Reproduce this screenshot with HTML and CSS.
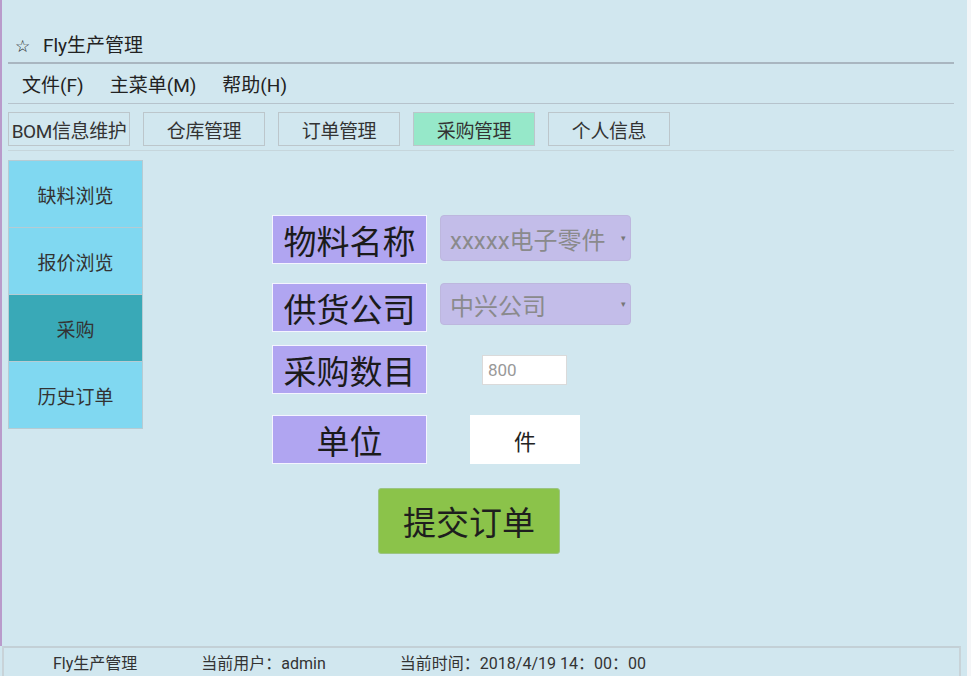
FILE: index.html
```html
<!DOCTYPE html>
<html lang="zh-CN">
<head>
<meta charset="utf-8">
<title>Fly生产管理</title>
<link rel="stylesheet" href="styles.css">
</head>
<body>
<div class="app">
  <div class="main">
    <div class="title"><span class="star">☆</span><span class="title-text">Fly生产管理</span></div>
    <div class="menu">
      <span class="menu-item">文件(F)</span>
      <span class="menu-item">主菜单(M)</span>
      <span class="menu-item">帮助(H)</span>
    </div>
    <div class="tabs">
      <div class="tab">BOM信息维护</div>
      <div class="tab">仓库管理</div>
      <div class="tab">订单管理</div>
      <div class="tab tab-active">采购管理</div>
      <div class="tab">个人信息</div>
    </div>
    <div class="content">
      <div class="side">
        <div class="side-item">缺料浏览</div>
        <div class="side-item">报价浏览</div>
        <div class="side-item side-active">采购</div>
        <div class="side-item">历史订单</div>
      </div>
      <div class="form">
        <div class="row row1">
          <div class="label">物料名称</div>
          <div class="combo combo1"><span>xxxxx电子零件</span><span class="arrow">▾</span></div>
        </div>
        <div class="row row2">
          <div class="label">供货公司</div>
          <div class="combo combo2"><span>中兴公司</span><span class="arrow">▾</span></div>
        </div>
        <div class="row row3">
          <div class="label">采购数目</div>
          <div class="num">800</div>
        </div>
        <div class="row row4">
          <div class="label">单位</div>
          <div class="unit">件</div>
        </div>
        <div class="submit">提交订单</div>
      </div>
    </div>
  </div>
  <div class="status">
    <span class="st st1">Fly生产管理</span>
    <span class="st st2">当前用户：admin</span>
    <span class="st st3">当前时间：2018/4/19 14：00：00</span>
  </div>
</div>
</body>
</html>
```
FILE: styles.css
```css
html, body {
  margin: 0;
  padding: 0;
  background: #f5f6f8;
}
body {
  width: 971px;
  height: 676px;
  overflow: hidden;
  font-family: Roboto, "Noto Sans CJK SC", sans-serif;
  color: #222;
}
.app {
  width: 967px;
  height: 676px;
  background: #d1e7ef;
  display: flex;
  flex-direction: column;
}
.main {
  flex: 1;
  border-left: 2px solid #b99bcb;
  padding: 0 13px 0 6px;
  display: flex;
  flex-direction: column;
}
.title {
  height: 64px;
  box-sizing: border-box;
  padding-top: 30px;
  border-bottom: 2px solid #a9b6c0;
  display: flex;
  align-items: center;
  font-size: 19px;
  line-height: 26px;
}
.star {
  margin-left: 7px;
  font-size: 17px;
  width: 28px;
  font-family: "DejaVu Sans", sans-serif;
}
.menu {
  height: 40px;
  box-sizing: border-box;
  border-bottom: 1px solid #b6c3cc;
  display: flex;
  align-items: center;
  font-size: 19px;
  padding-left: 14px;
  gap: 26px;
}
.tabs {
  height: 47px;
  box-sizing: border-box;
  padding-top: 8px;
  border-bottom: 1px solid #c6d6dc;
  display: flex;
  gap: 13px;
}
.tab {
  width: 122px;
  height: 34px;
  box-sizing: border-box;
  border: 1px solid #bcc6cb;
  display: flex;
  align-items: center;
  justify-content: center;
  font-size: 19px;
  color: #333;
  white-space: nowrap;
  letter-spacing: -0.4px;
}
.tab-active {
  background: #96e8c9;
}
.content {
  display: flex;
  flex: 1;
}
.side {
  margin-top: 9px;
  width: 135px;
  display: flex;
  flex-direction: column;
}
.side-item {
  height: 68px;
  box-sizing: border-box;
  border: 1px solid #b6cbd3;
  margin-top: -1px;
  background: #80d8f1;
  display: flex;
  align-items: center;
  justify-content: center;
  font-size: 19px;
  color: #333;
}
.side-item:first-child { margin-top: 0; }
.side-active {
  background: #39a9b7;
}
.form {
  margin-left: 129px;
  padding-top: 64px;
  display: flex;
  flex-direction: column;
}
.row {
  display: flex;
  align-items: center;
}
.row1 { align-items: flex-start; }
.row2 { margin-top: 19px; align-items: flex-start; }
.row3 { margin-top: 13px; }
.row4 { margin-top: 21px; }
.label {
  width: 155px;
  height: 49px;
  box-sizing: border-box;
  border: 1px solid #f4f4ff;
  background: #b0a5f1;
  display: flex;
  align-items: center;
  justify-content: center;
  font-size: 33px;
  color: #1b1b1b;
}
.combo {
  margin-left: 13px;
  width: 191px;
  box-sizing: border-box;
  background: #c3bde9;
  border: 1px solid #bdb7de;
  border-radius: 4px;
  display: flex;
  align-items: center;
  justify-content: space-between;
  padding: 0 4px 0 9px;
  font-size: 24px;
  color: #8a8a8c;
  white-space: nowrap;
}
.combo1 { height: 46px; }
.combo2 { height: 42px; }
.arrow {
  font-size: 9px;
  color: #777;
}
.num {
  margin-left: 55px;
  width: 85px;
  height: 30px;
  box-sizing: border-box;
  background: #fff;
  border: 1px solid #dadada;
  font-size: 17px;
  color: #999;
  display: flex;
  align-items: center;
  padding-left: 5px;
}
.unit {
  margin-left: 43px;
  width: 110px;
  height: 49px;
  background: #fff;
  display: flex;
  align-items: center;
  justify-content: center;
  font-size: 22px;
  color: #222;
}
.submit {
  margin-top: 24px;
  margin-left: 106px;
  width: 182px;
  height: 66px;
  box-sizing: border-box;
  background: #8bc34a;
  border: 1px solid #9cc483;
  border-radius: 3px;
  display: flex;
  align-items: center;
  justify-content: center;
  font-size: 33px;
  color: #1e1e1e;
}
.status {
  height: 30px;
  margin-left: 2px;
  width: 959px;
  box-sizing: border-box;
  border-top: 2px solid #c3d0d6;
  border-left: 2px solid #c8d3d8;
  border-right: 2px solid #c8d3d8;
  display: flex;
  align-items: center;
  font-size: 16px;
  color: #333;
}
.st1 { margin-left: 49px; }
.st2 { margin-left: 64px; }
.st3 { margin-left: 74px; }
```
